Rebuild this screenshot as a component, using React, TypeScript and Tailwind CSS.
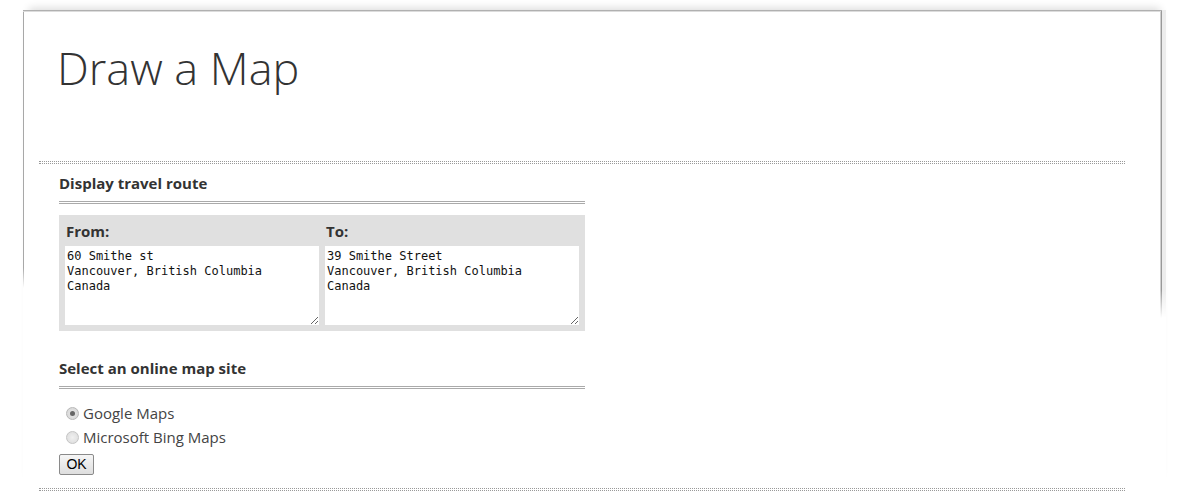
export default function App() {
  return (
    <div className="min-h-[491px] bg-white pt-[10px] pl-[23px] font-['Open_Sans',sans-serif] text-[#333]">
      <div className="w-[1143px] bg-no-repeat shadow-[0_-8px_8px_-6px_rgba(0,0,0,0.14)] bg-[image:linear-gradient(#b0b0b0,#b0b0b0),linear-gradient(#dcdcdc,#dcdcdc),linear-gradient(to_bottom,#a8a8a8_0,#a8a8a8_258px,transparent_278px),linear-gradient(to_bottom,#999_0,#999_280px,transparent_308px),linear-gradient(to_bottom,#d0d0d0_0,#d0d0d0_280px,transparent_308px),linear-gradient(to_bottom,rgba(0,0,0,0.07)_0,rgba(0,0,0,0.07)_280px,transparent_308px)] bg-[position:left_top,left_1px,left_top,right_4px_top,right_5px_top,right_top] bg-[size:calc(100%_-_4px)_1px,calc(100%_-_5px)_1px,1px_100%,1px_100%,1px_100%,4px_100%]">
        <h1 className="pl-[34px] pt-[30px] text-[45px] leading-[56px] font-light text-[#333]">Draw a Map</h1>
        <div className="ml-[16px] mt-[65px] w-[1086px] h-[3px] border-y border-dotted border-[#999]" />
        <div className="ml-[36px] w-[526px]">
          <h2 className="mt-[9px] pb-[8px] text-[15px] leading-[20px] font-bold text-[#333] border-b-[3px] border-double border-[#aaa]">
            Display travel route
          </h2>
          <div className="mt-[11px] bg-[#e0e0e0] p-[6px] grid grid-cols-2 gap-x-[6px]">
            <div className="flex flex-col">
              <label className="pl-[1px] mb-[5px] text-[15px] leading-[20px] font-bold text-[#333]">From:</label>
              <textarea
                className="block w-full h-[79px] bg-white border-0 outline-none pt-[3px] pl-[2px] font-['DejaVu_Sans_Mono',monospace] text-[12px] leading-[15px] text-[#111]"
                defaultValue={"60 Smithe st\nVancouver, British Columbia\nCanada"}
              />
            </div>
            <div className="flex flex-col">
              <label className="pl-[1px] mb-[5px] text-[15px] leading-[20px] font-bold text-[#333]">To:</label>
              <textarea
                className="block w-full h-[79px] bg-white border-0 outline-none pt-[3px] pl-[2px] font-['DejaVu_Sans_Mono',monospace] text-[12px] leading-[15px] text-[#111]"
                defaultValue={"39 Smithe Street\nVancouver, British Columbia\nCanada"}
              />
            </div>
          </div>
          <h2 className="mt-[27px] pb-[8px] text-[15px] leading-[20px] font-bold text-[#333] border-b-[3px] border-double border-[#aaa]">
            Select an online map site
          </h2>
          <div className="mt-[12px] flex flex-col">
            <label className="h-[24px] flex items-center pl-[7px] gap-[4px] text-[15px] leading-[24px] text-[#444]">
              <span className="w-[13px] h-[13px] rounded-full border border-[#b8b8b8] bg-[radial-gradient(circle,#e8e8e8,#d4d4d4)] flex items-center justify-center">
                <span className="w-[5px] h-[5px] rounded-full bg-[#666]" />
              </span>
              Google Maps
            </label>
            <label className="h-[24px] flex items-center pl-[7px] gap-[4px] text-[15px] leading-[24px] text-[#444]">
              <span className="w-[13px] h-[13px] rounded-full border border-[#c4c4c4] bg-[radial-gradient(circle,#f0f0f0,#dadada)]" />
              Microsoft Bing Maps
            </label>
          </div>
          <button className="mt-[5px] w-[35px] h-[21px] rounded-[2px] border border-[#8a8a8a] bg-[linear-gradient(#f6f6f6,#dedede)] font-['Liberation_Sans',Arial,sans-serif] text-[14px] leading-[19px] text-black">
            OK
          </button>
        </div>
        <div className="ml-[16px] mt-[13px] w-[1086px] h-[3px] border-y border-dotted border-[#999]" />
      </div>
    </div>
  );
}
